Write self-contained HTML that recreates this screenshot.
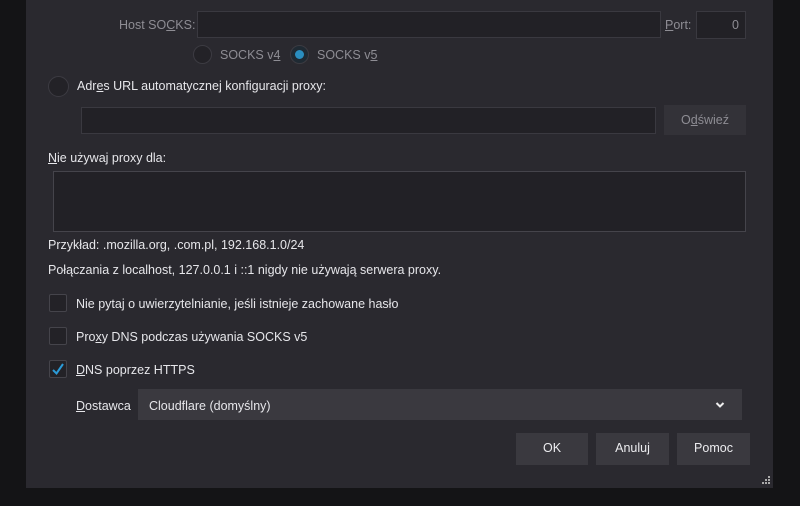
<!DOCTYPE html>
<html><head><meta charset="utf-8"><style>
*{box-sizing:border-box;margin:0;padding:0}
body{width:800px;height:506px;background:#141416;position:relative;overflow:hidden;font-family:"Liberation Sans",sans-serif;font-size:12.5px;color:#e6e6ea}
.dlg{position:absolute;left:26px;top:0;width:747px;height:488px;background:#2a292f}
.a{position:absolute;white-space:nowrap}
.in{position:absolute;background:#222126;border:1px solid #3a3940}
.dim{color:#8e8d94}
.btn{position:absolute;background:#3a393f;text-align:center;line-height:31px;color:#ececef}
.cb{position:absolute;width:18px;height:18px;border:1px solid #45444b;background:#232227;border-radius:2px}
.rd{position:absolute;border-radius:50%;background:#232227;border:1px solid #3c3b42}
u{text-decoration:underline}
</style></head><body>
<div class="dlg"></div>
<div class="a dim" style="left:119px;top:18px">Host SO<u>C</u>KS:</div>
<div class="in" style="left:197px;top:11px;width:464px;height:27px"></div>
<div class="a dim" style="left:665px;top:18px"><u>P</u>ort:</div>
<div class="in" style="left:696px;top:11px;width:50px;height:28px"></div>
<div class="a dim" style="left:732px;top:18px">0</div>
<div class="rd" style="left:193px;top:45px;width:19px;height:19px"></div>
<div class="a dim" style="left:220px;top:48px">SOCKS v<u>4</u></div>
<div class="rd" style="left:290px;top:45px;width:19px;height:19px;background:#1f2a33"><div style="position:absolute;left:4px;top:4px;width:9px;height:9px;border-radius:50%;background:#2a8ec0"></div></div>
<div class="a dim" style="left:317px;top:48px">SOCKS v<u>5</u></div>
<div class="rd" style="left:48px;top:76px;width:21px;height:21px"></div>
<div class="a" style="left:77px;top:79px">Adr<u>e</u>s URL automatycznej konfiguracji proxy:</div>
<div class="in" style="left:81px;top:107px;width:575px;height:27px"></div>
<div class="btn dim" style="left:664px;top:105px;width:82px;height:30px;background:#333238;color:#8e8d94">O<u>d</u>świeź</div>
<div class="a" style="left:48px;top:151px"><u>N</u>ie używaj proxy dla:</div>
<div class="in" style="left:53px;top:171px;width:693px;height:61px;border-color:#45444b"></div>
<div class="a" style="left:48px;top:238px">Przykład: .mozilla.org, .com.pl, 192.168.1.0/24</div>
<div class="a" style="left:48px;top:263px">Połączania z localhost, 127.0.0.1 i ::1 nigdy nie używają serwera proxy.</div>
<div class="cb" style="left:49px;top:294px"></div>
<div class="a" style="left:76px;top:297px">Nie pytaj o uwierzytelnianie, jeśli istnieje zachowane hasło</div>
<div class="cb" style="left:49px;top:327px"></div>
<div class="a" style="left:76px;top:330px">Pro<u>x</u>y DNS podczas używania SOCKS v5</div>
<div class="cb" style="left:49px;top:360px"><svg width="16" height="16" viewBox="0 0 16 16" style="position:absolute;left:0;top:0"><path d="M3 9 L6.5 12.5 L13 3" stroke="#2b9bd8" stroke-width="2" fill="none"/></svg></div>
<div class="a" style="left:76px;top:363px"><u>D</u>NS poprzez HTTPS</div>
<div class="a" style="left:76px;top:399px"><u>D</u>ostawca</div>
<div style="position:absolute;left:138px;top:389px;width:604px;height:31px;background:#3a393f"></div>
<div class="a" style="left:149px;top:399px">Cloudflare (domyślny)</div>
<svg style="position:absolute;left:715px;top:401px" width="10" height="8"><path d="M1.5 2 L5 5.5 L8.5 2" stroke="#eee" stroke-width="2" fill="none"/></svg>
<div class="btn" style="left:516px;top:433px;width:72px;height:32px">OK</div>
<div class="btn" style="left:596px;top:433px;width:73px;height:32px">Anuluj</div>
<div class="btn" style="left:677px;top:433px;width:73px;height:32px">Pomoc</div>
<svg style="position:absolute;left:762px;top:476px" width="10" height="10"><g fill="#aaa"><rect x="6" y="0" width="2" height="2"/><rect x="3" y="3" width="2" height="2"/><rect x="6" y="3" width="2" height="2"/><rect x="0" y="6" width="2" height="2"/><rect x="3" y="6" width="2" height="2"/><rect x="6" y="6" width="2" height="2"/></g></svg>
</body></html>
